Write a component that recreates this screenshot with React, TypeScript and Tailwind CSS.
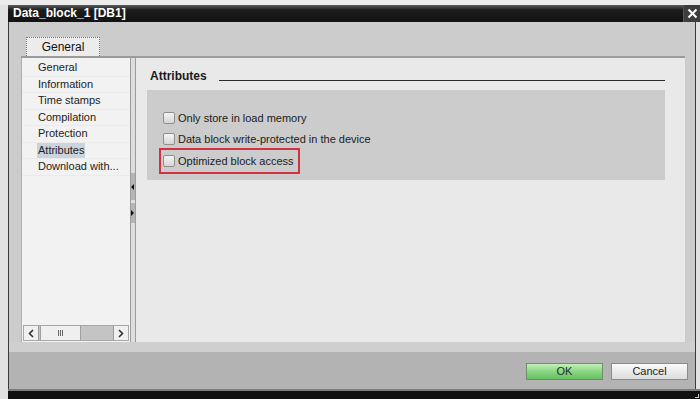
import React from "react";

const navItems = [
  "General",
  "Information",
  "Time stamps",
  "Compilation",
  "Protection",
  "Attributes",
  "Download with...",
];

const attributes = [
  { label: "Only store in load memory", marked: false },
  { label: "Data block write-protected in the device", marked: false },
  { label: "Optimized block access", marked: true },
];

function Checkbox() {
  return (
    <span className="w-[12px] h-[12px] rounded-[2px] border border-[#8f8f8f] bg-gradient-to-b from-[#f4f4f4] to-[#d6d6d6] shrink-0" />
  );
}

function NavPane() {
  return (
    <div className="w-[109px] flex flex-col bg-[#f2f2f2] border-l border-[#b0b0b0]">
      <ul className="pt-[2px]">
        {navItems.map((item) => (
          <li
            key={item}
            className="h-[16.5px] flex items-center pl-[16px] border-b border-[#ebebeb]"
          >
            <span
              className={
                item === "Attributes"
                  ? "bg-[#cbd3dd] px-[1px] -ml-[1px] leading-[15px]"
                  : "leading-[15px]"
              }
            >
              {item}
            </span>
          </li>
        ))}
      </ul>
      <div className="flex-1" />
      {/* horizontal scrollbar */}
      <div className="h-[16px] mb-[1px] mx-[1px] flex bg-[#c4c4c4] border border-[#a8a8a8]">
        <div className="w-[15px] flex items-center justify-center bg-[#f0f0f0] border-r border-[#9a9a9a]">
          <svg width="6" height="9" viewBox="0 0 6 9">
            <path d="M5 1L1.5 4.5L5 8" stroke="#333" strokeWidth="1.6" fill="none" />
          </svg>
        </div>
        <div className="w-[41px] ml-[1px] flex items-center justify-center bg-[#efefef] border-x border-[#a0a0a0]">
          <span className="flex gap-[1px]">
            <i className="w-[1px] h-[6px] bg-[#666]" />
            <i className="w-[1px] h-[6px] bg-[#666]" />
            <i className="w-[1px] h-[6px] bg-[#666]" />
          </span>
        </div>
        <div className="flex-1" />
        <div className="w-[15px] flex items-center justify-center bg-[#f0f0f0] border-l border-[#9a9a9a]">
          <svg width="6" height="9" viewBox="0 0 6 9">
            <path d="M1 1L4.5 4.5L1 8" stroke="#333" strokeWidth="1.6" fill="none" />
          </svg>
        </div>
      </div>
    </div>
  );
}

function Splitter() {
  return (
    <div className="w-[6px] flex flex-col bg-[#dedede] border-x border-[#9c9c9c]">
      <div className="h-[115px]" />
      <div className="h-[27px] bg-[#b5b5b5] flex items-center justify-start">
        <svg width="4" height="6" viewBox="0 0 4 6">
          <path d="M3 0L0 3L3 6Z" fill="#111" />
        </svg>
      </div>
      <div className="h-[3px]" />
      <div className="h-[20px] bg-[#b5b5b5] flex items-center justify-start">
        <svg width="4" height="6" viewBox="0 0 4 6">
          <path d="M0 0L3 3L0 6Z" fill="#111" />
        </svg>
      </div>
    </div>
  );
}

function AttributesView() {
  return (
    <div className="flex-1 bg-[#e9e9e9] pt-[11px]">
      <div className="flex items-end pl-[14px] pr-[20px] h-[14px]">
        <span className="text-[12px] font-bold text-[#1a1a1a] leading-[14px]">
          Attributes
        </span>
        <div className="flex-1 ml-[12px] mb-[2px] h-[1px] bg-[#2a2a2a]" />
      </div>
      <div className="ml-[11px] mr-[20px] mt-[7px] h-[90px] bg-[#cccccc] pt-[17px] pl-[16px]">
        {attributes.map((a) => (
          <div key={a.label} className="relative h-[21.5px] flex items-center">
            <Checkbox />
            <span className="ml-[3px] text-[#202020]">{a.label}</span>
            {a.marked && (
              <span className="absolute -left-[4px] top-[-2px] w-[141px] h-[26px] border-2 border-[#d2313f]" />
            )}
          </div>
        ))}
      </div>
    </div>
  );
}

export default function App() {
  return (
    <div
      className="w-[700px] h-[399px] flex flex-col overflow-hidden bg-[#e2e2e2] text-[11px] text-[#222]"
      style={{ fontFamily: '"Liberation Sans", Arial, sans-serif' }}
    >
      <div className="h-[5px] bg-[#ececec]" />
      <div className="flex-1 flex flex-col ml-[8px]">
        {/* title bar */}
        <div className="h-[17px] flex items-center bg-[linear-gradient(#5e5e5e,#1c1c1c_30%,#121212)]">
          <span className="pl-[5px] text-white font-bold text-[12px] leading-[17px]">
            Data_block_1 [DB1]
          </span>
          <div className="ml-auto w-[17px] h-full flex items-center justify-center bg-[#3d3d3d] border-l border-[#555]">
            <svg width="11" height="11" viewBox="0 0 11 11">
              <path d="M1.5 1.5L9.5 9.5M9.5 1.5L1.5 9.5" stroke="#fff" strokeWidth="2" />
            </svg>
          </div>
        </div>

        {/* dialog body */}
        <div className="h-[367px] mr-[4px] flex flex-col bg-[#cccccc] border-x border-[#3a3a3a]">
          <div className="pt-[15px] pl-[17px] h-[34px]">
            <div className="w-[74px] h-[19px] flex items-center justify-center bg-[#ececec] border border-dotted border-[#777] border-b-0 text-[12px] text-[#111]">
              General
            </div>
          </div>
          <div className="h-[286px] ml-[12px] mr-[10px] flex border-t-2 border-[#9b9b9b]">
            <NavPane />
            <Splitter />
            <AttributesView />
          </div>
          <div className="h-[10px] bg-[#cfcfcf]" />
          <div className="flex-1 bg-[#b3b3b3] flex justify-end items-start pt-[11px] pr-[7px] gap-[8px]">
            <button className="w-[77px] h-[17px] border border-[#6f8f6a] bg-gradient-to-b from-[#c4efbc] via-[#8ad683] to-[#66be62] text-[11px] text-[#1f2f1f] leading-[15px]">
              OK
            </button>
            <button className="w-[77px] h-[17px] border border-[#8c8c8c] bg-gradient-to-b from-[#fbfbfb] to-[#dcdcdc] text-[11px] text-[#222] leading-[15px]">
              Cancel
            </button>
          </div>
        </div>
        <div className="h-[2px] bg-[#7d7d7d]" />
        <div className="h-[8px] bg-[#111] relative">
          <span className="absolute right-[1px] bottom-[1px] w-[4px] h-[4px] border-r border-b border-[#ccc]" />
        </div>
      </div>
    </div>
  );
}
